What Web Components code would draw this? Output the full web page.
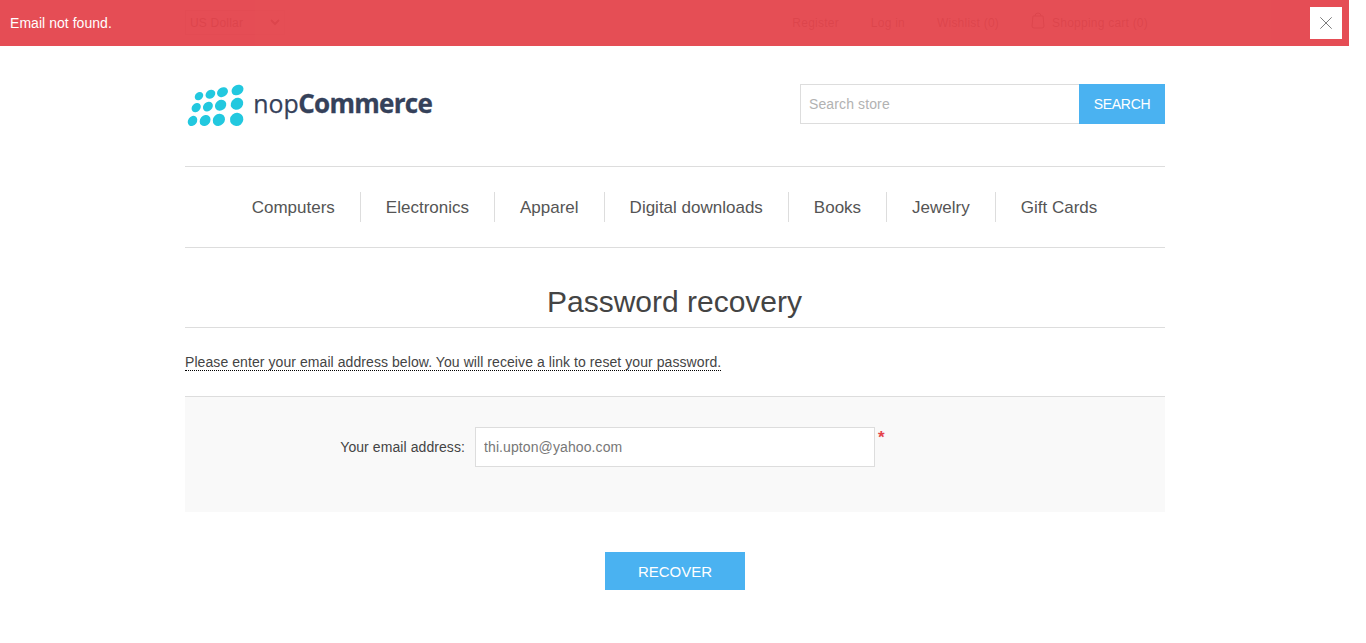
<!DOCTYPE html>
<html lang="en">
<head>
<meta charset="utf-8">
<title>nopCommerce. Password Recovery</title>
<style>
body { margin: 0; background: #fff; font: 14px "Liberation Sans", Arial, sans-serif; color: #444; }
</style>
</head>
<body>
<store-page>
  <bar-notification slot="notice">Email not found.</bar-notification>
  <top-links slot="top"></top-links>
  <store-header slot="header"></store-header>
  <main-menu slot="menu">
    <menu-item>Computers</menu-item><menu-item>Electronics</menu-item><menu-item>Apparel</menu-item><menu-item>Digital downloads</menu-item><menu-item>Books</menu-item><menu-item>Jewelry</menu-item><menu-item>Gift Cards</menu-item>
  </main-menu>
  <recovery-form>
    <span slot="title">Password recovery</span>
    <span slot="hint">Please enter your email address below. You will receive a link to reset your password.</span>
    <span slot="label">Your email address:</span>
  </recovery-form>
</store-page>
<script>
function define(name, html) {
  const template = document.createElement('template');
  template.innerHTML = html;
  customElements.define(name, class extends HTMLElement {
    constructor() {
      super();
      this.attachShadow({ mode: 'open' }).append(template.content.cloneNode(true));
    }
  });
}

define('store-page', `
<style>
:host { display: block; position: relative; width: 1349px; height: 643px; overflow: hidden; }
.wrap { width: 980px; margin: 0 0 0 185px; }
</style>
<slot name="notice"></slot>
<div class="wrap"><slot name="top"></slot><slot name="header"></slot><slot name="menu"></slot><slot></slot></div>`);

define('bar-notification', `
<style>
:host { position: absolute; z-index: 2; top: 0; left: 0; right: 0; height: 46px; box-sizing: border-box; padding: 0 7px 0 10px; display: flex; align-items: center; justify-content: space-between; background: #e4444c; opacity: .95; color: #fff; font-size: 14px; letter-spacing: .04px; }
button { width: 32px; height: 32px; border: 0; padding: 0; background: #fff; display: grid; place-items: center; }
svg { display: block; }
</style>
<span><slot></slot></span>
<button aria-label="Close"><svg width="12" height="12" viewBox="0 0 12 12"><path d="M.3 .3L11.7 11.7M11.7 .3L.3 11.7" stroke="#777" stroke-width="1"/></svg></button>`);

define('top-links', `
<style>
:host { display: flex; justify-content: space-between; align-items: center; height: 46px; font-size: 12px; color: #555; }
.currency { width: 100px; height: 25px; box-sizing: border-box; border: 1px solid #ddd; padding: 0 4px; display: flex; align-items: center; justify-content: space-between; margin-top: -1px; letter-spacing: .2px; }
nav { display: flex; align-items: center; padding-right: 17px; }
nav span { margin-left: 32px; letter-spacing: .23px; }
nav .cart { display: flex; align-items: center; gap: 7px; }
.cart svg { margin-top: -5px; }
</style>
<div class="currency">US Dollar<svg width="10" height="7" viewBox="0 0 10 7"><path d="M1 1l4 4 4-4" fill="none" stroke="#555" stroke-width="2"/></svg></div>
<nav><span>Register</span><span>Log in</span><span>Wishlist (0)</span><span class="cart"><svg width="14" height="17" viewBox="0 0 14 17"><path d="M2 4h10l1 10q0 2-2 2H3q-2 0-2-2zM4 4q0-3 3-3t3 3" fill="none" stroke="#555"/></svg>Shopping cart (0)</span></nav>`);

define('store-header', `
<style>
:host { display: flex; justify-content: space-between; align-items: flex-start; padding: 38px 0 42px; height: 40px; }
.logo { display: block; width: 270px; height: 50px; flex: none; overflow: visible; margin-left: -.5px; }
form { display: flex; width: 365px; height: 40px; }
input { flex: 1; min-width: 0; box-sizing: border-box; border: 1px solid #ddd; border-right: 0; padding: 0 8px; font: inherit; letter-spacing: .12px; border-radius: 0; outline: 0; }
input::placeholder { color: #b2b2b2; opacity: 1; }
button { width: 86px; border: 0; padding: 0; background: #4ab2f1; color: #fff; font: inherit; letter-spacing: -.3px; text-transform: uppercase; }
</style>
<svg class="logo" viewBox="0 0 270 50" role="img" aria-label="nopCommerce">
<g fill="#22c8df">
<ellipse cx="14" cy="12.2" rx="4.6" ry="3.7" transform="rotate(-40 14 12.2)"/>
<ellipse cx="25.4" cy="10.3" rx="5.2" ry="4.2" transform="rotate(-35 25.4 10.3)"/>
<ellipse cx="37.5" cy="8.2" rx="5.8" ry="4.6" transform="rotate(-32 37.5 8.2)"/>
<ellipse cx="52.5" cy="6" rx="6.3" ry="5" transform="rotate(-30 52.5 6)"/>
<ellipse cx="11.2" cy="23.6" rx="5.1" ry="4.1" transform="rotate(-45 11.2 23.6)"/>
<ellipse cx="22.9" cy="22.6" rx="5.4" ry="4.4" transform="rotate(-42 22.9 22.6)"/>
<ellipse cx="35.6" cy="21.3" rx="6" ry="5.1" transform="rotate(-38 35.6 21.3)"/>
<ellipse cx="52" cy="19.8" rx="6.5" ry="5.7" transform="rotate(-35 52 19.8)"/>
<ellipse cx="7.5" cy="36.9" rx="5.5" ry="4.4" transform="rotate(-55 7.5 36.9)"/>
<ellipse cx="20.1" cy="36.5" rx="6" ry="5" transform="rotate(-50 20.1 36.5)"/>
<ellipse cx="33.9" cy="35.8" rx="6.5" ry="5.7" transform="rotate(-45 33.9 35.8)"/>
<ellipse cx="51.7" cy="35.4" rx="6.8" ry="6.5" transform="rotate(-40 51.7 35.4)"/>
</g>
<g fill="#35415a" font-family="'Open Sans', 'Noto Sans', sans-serif" font-size="26">
<text x="68.2" y="29" textLength="45.5" lengthAdjust="spacingAndGlyphs" stroke="#35415a" stroke-width=".25">nop</text>
<text x="113.2" y="29" font-weight="700" textLength="134.6" lengthAdjust="spacing" stroke="#35415a" stroke-width=".3">Commerce</text>
</g></svg>
<form><input placeholder="Search store" aria-label="Search store"><button type="button">Search</button></form>`);

define('main-menu', `
<style>
:host { display: flex; justify-content: center; align-items: center; height: 82px; box-sizing: border-box; border: solid #ddd; border-width: 1px 0; padding-right: 1px; }
</style><slot></slot>`);

define('menu-item', `
<style>
:host { display: block; height: 30px; line-height: 32px; padding: 0 25px; font-size: 17px; color: #555; white-space: nowrap; border-left: 1px solid #ddd; }
:host(:first-child) { border-left: 0; }
</style><slot></slot>`);

define('recovery-form', `
<style>
:host { display: block; }
h1 { margin: 0; padding: 27px 1px 0 0; height: 52px; line-height: 53px; border-bottom: 1px solid #ddd; font-size: 30px; font-weight: 400; text-align: center; }
p { margin: 26px 0 25px; height: 17px; line-height: 16px; letter-spacing: .073px; }
p span { border-bottom: 1px dotted #000; }
.fields { display: flex; align-items: flex-start; background: #f9f9f9; border-top: 1px solid #ddd; padding: 30px 0 45px; }
label { width: 280px; text-align: right; line-height: 40px; margin-right: 10px; letter-spacing: .08px; }
input { box-sizing: border-box; width: 400px; height: 40px; border: 1px solid #ddd; padding: 0 8px; color: #777; font: inherit; letter-spacing: .1px; outline: 0; border-radius: 0; }
b { color: #e4434b; font-size: 17px; font-weight: 700; line-height: 22px; margin-left: 3px; }
.buttons { display: flex; justify-content: center; padding-top: 40px; }
button { width: 140px; height: 38px; padding: 0; border: 0; background: #4ab2f1; color: #fff; font: 15px "Liberation Sans", Arial, sans-serif; text-transform: uppercase; }
</style>
<h1><slot name="title"></slot></h1>
<p><span><slot name="hint"></slot></span></p>
<div class="fields"><label for="email"><slot name="label"></slot></label><input id="email" value="thi.upton@yahoo.com"><b>*</b></div>
<div class="buttons"><button>Recover</button></div>`);
</script>
</body>
</html>
